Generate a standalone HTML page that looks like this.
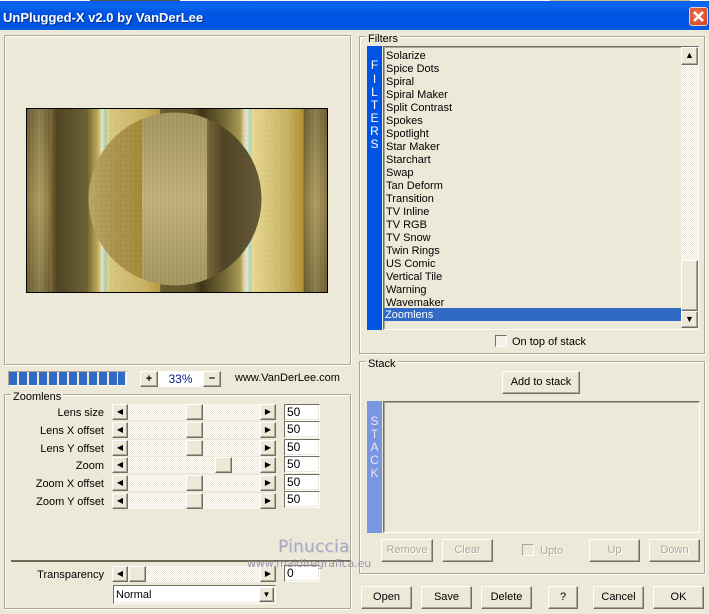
<!DOCTYPE html>
<html><head><meta charset="utf-8"><style>
html,body{margin:0;padding:0}
body{width:709px;height:614px;overflow:hidden;position:relative;background:#ece9d8;font:11px/14px "Liberation Sans",sans-serif;color:#000}
div,span.a{position:absolute;box-sizing:border-box;white-space:nowrap}
.g{border:1px solid #aca899;box-shadow:inset 1px 1px #fff,1px 1px #fff}
.l{background:#ece9d8;padding:0 2px;height:14px}
.b{background:#ece9d8;border:1px solid;border-color:#fff #716f64 #716f64 #fff;box-shadow:inset -1px -1px #aca899;text-align:center;line-height:21px}
.d{color:#aca899;text-shadow:1px 1px #fff}
.t{background:repeating-conic-gradient(#fff 0 25%,#ece9d8 0 50%) 0 0/2px 2px}
.e{background:#fff;border:1px solid;border-color:#716f64 #fff #fff #716f64;box-shadow:inset -1px -1px #ece9d8;font-size:12px;line-height:15px;padding-left:2px}
.r{width:100px;left:4px;text-align:right;height:14px}
.i{left:386px;height:13px;line-height:13px}
.v{left:367px;width:15px;text-align:center;color:#fff;font-size:12px;height:13px;line-height:13px}
svg{position:absolute;display:block}
</style></head><body>
<!-- title -->
<div style="left:0;top:0;width:709px;height:2px;background:#fff"></div>
<div style="left:90px;top:0;width:90px;height:1px;background:#555"></div>
<div style="left:550px;top:0;width:140px;height:1px;background:#c8c090"></div>
<div style="left:0;top:1px;width:709px;height:29px;background:linear-gradient(#0a5fe8 0,#0a66ee 5px,#0054e3 12px,#0054e3 24px,#0a5fe0 30px)"></div>
<div style="left:3px;top:9px;height:18px;font:bold 13px/18px 'Liberation Sans',sans-serif;color:#fff;text-shadow:1px 1px #0a2f90">UnPlugged-X v2.0 by VanDerLee</div>
<div style="left:689px;top:7px;width:19px;height:19px;background:radial-gradient(circle at 40% 40%,#ee7050,#d04020);border:1px solid #f0d0c0;border-radius:3px"></div>
<svg style="left:689px;top:7px" width="19" height="19"><path d="M5 5L14 14M14 5L5 14" stroke="#fff" stroke-width="2.6"/></svg>

<!-- preview panel -->
<div class="g" style="left:4px;top:35px;width:347px;height:330px"></div>
<svg style="left:26px;top:108px" width="302" height="185" viewBox="26 108 302 185">
<defs>
<linearGradient id="bg" gradientUnits="userSpaceOnUse" x1="27" x2="327" y1="0" y2="0">
<stop offset="0" stop-color="#8f7d45"/><stop offset=".044" stop-color="#b5a365"/><stop offset=".075" stop-color="#8f7d45"/>
<stop offset=".083" stop-color="#6f5f2e"/><stop offset=".1" stop-color="#4f4524"/><stop offset=".2" stop-color="#6f6234"/>
<stop offset=".238" stop-color="#c8b060"/><stop offset=".25" stop-color="#e8e8c8"/><stop offset=".26" stop-color="#a8d0b8"/><stop offset=".272" stop-color="#e2d488"/>
<stop offset=".277" stop-color="#d8c880"/><stop offset=".4" stop-color="#c8b060"/><stop offset=".443" stop-color="#b89a40"/><stop offset=".445" stop-color="#6b5d30"/>
<stop offset=".554" stop-color="#605428"/><stop offset=".582" stop-color="#3f3618"/><stop offset=".65" stop-color="#6f6434"/><stop offset=".71" stop-color="#a89850"/>
<stop offset=".723" stop-color="#d8d0a0"/><stop offset=".732" stop-color="#e8e8d0"/><stop offset=".743" stop-color="#a8d8c0"/><stop offset=".752" stop-color="#e8d890"/>
<stop offset=".865" stop-color="#c8b468"/><stop offset=".92" stop-color="#b09030"/><stop offset=".922" stop-color="#8a7a40"/><stop offset="1" stop-color="#8f7d45"/>
</linearGradient>
<linearGradient id="bgr" gradientUnits="userSpaceOnUse" x1="304" x2="327" y1="0" y2="0"><stop offset="0" stop-color="#8a7a40"/><stop offset=".5" stop-color="#b5a365"/><stop offset="1" stop-color="#8f7d45"/></linearGradient>
<linearGradient id="y1" x1="0" x2="1" y1="0" y2="0"><stop offset="0" stop-color="#b8a868"/><stop offset=".5" stop-color="#ac9452"/><stop offset="1" stop-color="#a88a38"/></linearGradient>
<linearGradient id="y2" x1="0" x2="0" y1="0" y2="1"><stop offset="0" stop-color="#a89a62"/><stop offset=".5" stop-color="#c4b47c"/><stop offset="1" stop-color="#a89a62"/></linearGradient>
<linearGradient id="y3" x1="0" x2="1" y1="0" y2="0"><stop offset="0" stop-color="#7a6a38"/><stop offset=".3" stop-color="#4f4526"/><stop offset="1" stop-color="#6a5c38"/></linearGradient>
<linearGradient id="vv" x1="0" x2="0" y1="0" y2="1"><stop offset="0" stop-color="#000" stop-opacity=".22"/><stop offset=".5" stop-color="#000" stop-opacity="0"/><stop offset="1" stop-color="#000" stop-opacity=".22"/></linearGradient>
<pattern id="st" width="4" height="4" patternUnits="userSpaceOnUse"><rect width="2" height="4" fill="#000" opacity=".05"/></pattern>
<pattern id="dt" width="5" height="5" patternUnits="userSpaceOnUse"><rect width="2" height="2" fill="#000" opacity=".06"/></pattern>
<clipPath id="cc"><circle cx="175" cy="199" r="86.5"/></clipPath>
</defs>
<rect x="26.5" y="108.5" width="301" height="184" fill="url(#bg)"/>
<rect x="304" y="109" width="23" height="183" fill="url(#bgr)"/>
<rect x="27" y="109" width="23" height="183" fill="url(#vv)"/>
<rect x="304" y="109" width="23" height="183" fill="url(#vv)"/>
<rect x="27" y="109" width="23" height="183" fill="url(#st)"/>
<rect x="304" y="109" width="23" height="183" fill="url(#st)"/>
<rect x="56" y="109" width="240" height="183" fill="url(#dt)" opacity=".5"/>
<g clip-path="url(#cc)">
<rect x="88" y="112" width="54" height="174" fill="url(#y1)"/>
<rect x="88" y="112" width="54" height="174" fill="url(#dt)"/>
<rect x="142" y="112" width="65" height="174" fill="url(#y2)"/>
<rect x="142" y="112" width="65" height="174" fill="url(#st)"/>
<rect x="207" y="112" width="56" height="174" fill="url(#y3)"/>
<rect x="207" y="112" width="56" height="174" fill="url(#dt)"/>
</g>
<rect x="26.5" y="108.5" width="301" height="184" fill="none" stroke="#000"/>
</svg>

<!-- progress -->
<div style="left:8px;top:371px;width:119px;height:15px;background:#ece9d8;border:1px solid;border-color:#aca899 #fff #fff #aca899"></div>
<svg style="left:9px;top:372px" width="117" height="13"><g fill="#316ac5"><rect x="0" width="8" height="13"/><rect x="10" width="8" height="13"/><rect x="20" width="8" height="13"/><rect x="30" width="8" height="13"/><rect x="40" width="8" height="13"/><rect x="50" width="8" height="13"/><rect x="60" width="8" height="13"/><rect x="70" width="8" height="13"/><rect x="80" width="8" height="13"/><rect x="90" width="8" height="13"/><rect x="100" width="8" height="13"/><rect x="109" width="7" height="13"/></g></svg>
<div class="b" style="left:140px;top:371px;width:18px;height:16px;line-height:14px;font-weight:bold">+</div>
<div style="left:158px;top:371px;width:45px;height:16px;background:#fff;color:#0a1a80;text-align:center;line-height:16px;font-size:12px">33%</div>
<div class="b" style="left:203px;top:371px;width:18px;height:16px;line-height:13px;font-weight:bold">–</div>
<div style="left:235px;top:371px;height:14px">www.VanDerLee.com</div>

<!-- zoomlens -->
<div class="g" style="left:4px;top:394px;width:347px;height:215px"></div>
<div class="l" style="left:11px;top:390px">Zoomlens</div>

<div class="r" style="top:406px">Lens size</div>
<div class="t" style="left:128px;top:404px;width:132px;height:16px"></div>
<div class="b" style="left:112px;top:404px;width:16px;height:16px;font-size:8px;line-height:13px">◀</div>
<div class="b" style="left:260px;top:404px;width:16px;height:16px;font-size:8px;line-height:13px">▶</div>
<div class="b" style="left:186px;top:404px;width:17px;height:16px"></div>
<div class="e" style="left:284px;top:404px;width:36px;height:17px">50</div>

<div class="r" style="top:424px">Lens X offset</div>
<div class="t" style="left:128px;top:422px;width:132px;height:16px"></div>
<div class="b" style="left:112px;top:422px;width:16px;height:16px;font-size:8px;line-height:13px">◀</div>
<div class="b" style="left:260px;top:422px;width:16px;height:16px;font-size:8px;line-height:13px">▶</div>
<div class="b" style="left:186px;top:422px;width:17px;height:16px"></div>
<div class="e" style="left:284px;top:421px;width:36px;height:17px">50</div>

<div class="r" style="top:442px">Lens Y offset</div>
<div class="t" style="left:128px;top:440px;width:132px;height:16px"></div>
<div class="b" style="left:112px;top:440px;width:16px;height:16px;font-size:8px;line-height:13px">◀</div>
<div class="b" style="left:260px;top:440px;width:16px;height:16px;font-size:8px;line-height:13px">▶</div>
<div class="b" style="left:186px;top:440px;width:17px;height:16px"></div>
<div class="e" style="left:284px;top:439px;width:36px;height:17px">50</div>

<div class="r" style="top:459px">Zoom</div>
<div class="t" style="left:128px;top:457px;width:132px;height:16px"></div>
<div class="b" style="left:112px;top:457px;width:16px;height:16px;font-size:8px;line-height:13px">◀</div>
<div class="b" style="left:260px;top:457px;width:16px;height:16px;font-size:8px;line-height:13px">▶</div>
<div class="b" style="left:215px;top:457px;width:17px;height:16px"></div>
<div class="e" style="left:284px;top:456px;width:36px;height:17px">50</div>

<div class="r" style="top:477px">Zoom X offset</div>
<div class="t" style="left:128px;top:475px;width:132px;height:16px"></div>
<div class="b" style="left:112px;top:475px;width:16px;height:16px;font-size:8px;line-height:13px">◀</div>
<div class="b" style="left:260px;top:475px;width:16px;height:16px;font-size:8px;line-height:13px">▶</div>
<div class="b" style="left:186px;top:475px;width:17px;height:16px"></div>
<div class="e" style="left:284px;top:474px;width:36px;height:17px">50</div>

<div class="r" style="top:495px">Zoom Y offset</div>
<div class="t" style="left:128px;top:493px;width:132px;height:16px"></div>
<div class="b" style="left:112px;top:493px;width:16px;height:16px;font-size:8px;line-height:13px">◀</div>
<div class="b" style="left:260px;top:493px;width:16px;height:16px;font-size:8px;line-height:13px">▶</div>
<div class="b" style="left:186px;top:493px;width:17px;height:16px"></div>
<div class="e" style="left:284px;top:491px;width:36px;height:17px">50</div>

<div style="left:11px;top:560px;width:340px;height:2px;background:#6f6a55"></div>
<div class="r" style="top:568px">Transparency</div>
<div class="t" style="left:128px;top:566px;width:132px;height:16px"></div>
<div class="b" style="left:112px;top:566px;width:16px;height:16px;font-size:8px;line-height:13px">◀</div>
<div class="b" style="left:260px;top:566px;width:16px;height:16px;font-size:8px;line-height:13px">▶</div>
<div class="b" style="left:129px;top:566px;width:17px;height:16px"></div>
<div class="e" style="left:284px;top:565px;width:36px;height:17px">0</div>
<div class="e" style="left:113px;top:585px;width:163px;height:19px;line-height:18px;font-size:11px">Normal</div>
<div class="b" style="left:259px;top:587px;width:15px;height:15px;font-size:8px;line-height:13px">▼</div>

<!-- filters -->
<div class="g" style="left:359px;top:36px;width:346px;height:318px"></div>
<div class="l" style="left:366px;top:32px">Filters</div>
<div style="left:367px;top:46px;width:15px;height:284px;background:#0054e3"></div>
<div class="v" style="top:59px">F</div><div class="v" style="top:73px">I</div><div class="v" style="top:86px">L</div><div class="v" style="top:99px">T</div><div class="v" style="top:112px">E</div><div class="v" style="top:125px">R</div><div class="v" style="top:138px">S</div>
<div style="left:383px;top:46px;width:316px;height:284px;border:1px solid;border-color:#716f64 #fff #fff #716f64;box-shadow:inset 0 1px #aca899,inset 1px 0 #aca899"></div>
<div class="i" style="top:50px">Solarize</div>
<div class="i" style="top:63px">Spice Dots</div>
<div class="i" style="top:76px">Spiral</div>
<div class="i" style="top:89px">Spiral Maker</div>
<div class="i" style="top:102px">Split Contrast</div>
<div class="i" style="top:115px">Spokes</div>
<div class="i" style="top:128px">Spotlight</div>
<div class="i" style="top:141px">Star Maker</div>
<div class="i" style="top:154px">Starchart</div>
<div class="i" style="top:167px">Swap</div>
<div class="i" style="top:180px">Tan Deform</div>
<div class="i" style="top:193px">Transition</div>
<div class="i" style="top:206px">TV Inline</div>
<div class="i" style="top:219px">TV RGB</div>
<div class="i" style="top:232px">TV Snow</div>
<div class="i" style="top:245px">Twin Rings</div>
<div class="i" style="top:258px">US Comic</div>
<div class="i" style="top:271px">Vertical Tile</div>
<div class="i" style="top:284px">Warning</div>
<div class="i" style="top:297px">Wavemaker</div>
<div style="left:384px;top:308px;width:297px;height:13px;background:#316ac5"></div>
<div class="i" style="top:309px;left:385px;color:#fff">Zoomlens</div>
<div class="t" style="left:681px;top:47px;width:17px;height:281px"></div>
<div class="b" style="left:681px;top:47px;width:17px;height:18px;font-size:9px;line-height:15px">▲</div>
<div class="b" style="left:681px;top:260px;width:17px;height:51px"></div>
<div class="b" style="left:681px;top:311px;width:17px;height:17px;font-size:9px;line-height:15px">▼</div>
<div style="left:495px;top:335px;width:12px;height:12px;background:#f4f2e8;border:1px solid;border-color:#716f64 #fff #fff #716f64"></div>
<div style="left:512px;top:335px">On top of stack</div>

<!-- stack -->
<div class="g" style="left:359px;top:361px;width:346px;height:213px"></div>
<div class="l" style="left:366px;top:357px">Stack</div>
<div class="b" style="left:502px;top:371px;width:78px;height:23px;line-height:20px">Add to stack</div>
<div style="left:367px;top:401px;width:15px;height:132px;background:#7b96e0"></div>
<div class="v" style="top:415px;color:#e8e8f0">S</div><div class="v" style="top:428px;color:#e8e8f0">T</div><div class="v" style="top:441px;color:#e8e8f0">A</div><div class="v" style="top:454px;color:#e8e8f0">C</div><div class="v" style="top:467px;color:#e8e8f0">K</div>
<div style="left:383px;top:401px;width:317px;height:132px;border:1px solid;border-color:#716f64 #fff #fff #716f64;box-shadow:inset 0 1px #aca899,inset 1px 0 #aca899"></div>
<div class="b d" style="left:381px;top:539px;width:52px;height:23px">Remove</div>
<div class="b d" style="left:442px;top:539px;width:51px;height:23px">Clear</div>
<div style="left:522px;top:544px;width:12px;height:12px;border:1px solid;border-color:#aca899 #fff #fff #aca899"></div>
<div class="d" style="left:540px;top:544px">Upto</div>
<div class="b d" style="left:589px;top:539px;width:51px;height:23px">Up</div>
<div class="b d" style="left:649px;top:539px;width:51px;height:23px">Down</div>

<!-- bottom -->
<div class="b" style="left:361px;top:586px;width:51px;height:23px">Open</div>
<div class="b" style="left:421px;top:586px;width:51px;height:23px">Save</div>
<div class="b" style="left:481px;top:586px;width:51px;height:23px">Delete</div>
<div class="b" style="left:548px;top:586px;width:30px;height:23px">?</div>
<div class="b" style="left:593px;top:586px;width:51px;height:23px">Cancel</div>
<div class="b" style="left:653px;top:586px;width:51px;height:23px">OK</div>

<!-- watermark -->
<div style="left:278px;top:537px;height:20px;font:17px/20px 'DejaVu Sans',sans-serif;color:#a9a9c4;text-shadow:1px 1px #d8d6d0;letter-spacing:.2px">Pinuccia</div>
<div style="left:247px;top:557px;height:14px;font:11px/14px 'DejaVu Sans',sans-serif;color:#9a9aae;letter-spacing:-.1px">www.maidiregrafica.eu</div>
</body></html>
